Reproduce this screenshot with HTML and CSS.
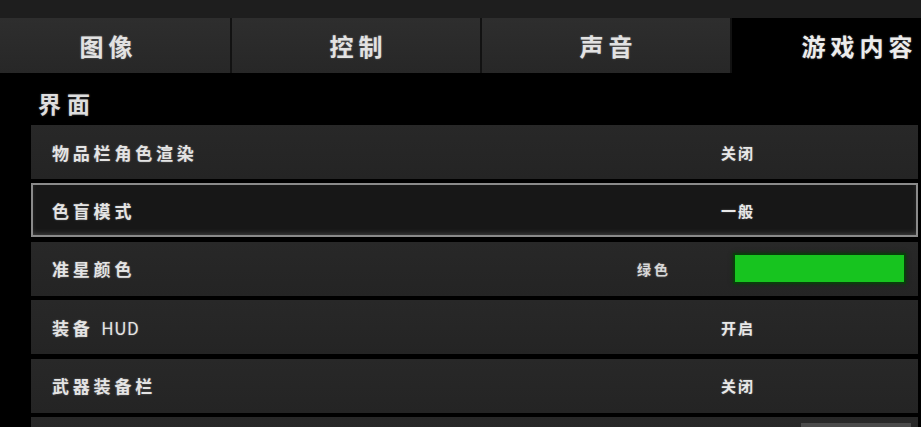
FILE: index.html
```html
<!DOCTYPE html>
<html lang="zh">
<head>
<meta charset="utf-8">
<link rel="stylesheet" href="styles.css">
</head>
<body>
<div class="topstrip"></div>
<nav class="tabs">
  <div class="tab">图像</div>
  <div class="tab">控制</div>
  <div class="tab">声音</div>
  <div class="tab active">游戏内容</div>
</nav>
<main class="content">
  <h2 class="section">界面</h2>
  <div class="rows">
    <div class="row"><span class="label">物品栏角色渲染</span><span class="value">关闭</span></div>
    <div class="row selected"><span class="label">色盲模式</span><span class="value">一般</span></div>
    <div class="row color-row"><span class="label">准星颜色</span><span class="cname">绿色</span><span class="swatch"></span></div>
    <div class="row"><span class="label">装备 <span class="latin">HUD</span></span><span class="value">开启</span></div>
    <div class="row"><span class="label">武器装备栏</span><span class="value">关闭</span></div>
    <div class="row"><span class="label"></span><span class="slider"></span></div>
  </div>
</main>
</body>
</html>
```
FILE: styles.css
```css
html, body {
  margin: 0;
  padding: 0;
  background: #000;
  width: 921px;
  height: 427px;
  overflow: hidden;
  font-family: "Noto Sans CJK SC", "Noto Sans", sans-serif;
  color: #e6e6e6;
}
.topstrip {
  height: 18px;
  background: #1e1e1e;
}
.tabs {
  display: flex;
  margin-left: -18px;
  height: 55px;
  overflow: hidden;
}
.tab {
  flex: 0 0 250px;
  box-sizing: border-box;
  display: flex;
  align-items: center;
  justify-content: center;
  background: linear-gradient(#2e2e2e, #272727);
  border-right: 2px solid #121212;
  font-size: 24px;
  font-weight: 700;
  letter-spacing: 5px;
  text-indent: 5px;
  color: #e2e2e2;
  text-shadow: 0 0 2px rgba(255,255,255,0.35);
}
.tab.active {
  background: #000;
  border-right: none;
  color: #ececec;
}
.content {
  padding-left: 31px;
  padding-right: 3px;
}
.section {
  margin: 0;
  padding-left: 7px;
  height: 52px;
  line-height: 60px;
  font-size: 23px;
  font-weight: 700;
  letter-spacing: 6px;
  color: #dedede;
  text-shadow: 0 0 2px rgba(255,255,255,0.35);
}
.rows {
  display: flex;
  flex-direction: column;
  gap: 4.4px;
}
.row {
  height: 54px;
  box-sizing: border-box;
  display: flex;
  align-items: center;
  background: linear-gradient(#282828, #242424);
  padding-left: 21px;
  font-size: 17px;
  font-weight: 700;
  text-shadow: 0 0 2px rgba(255,255,255,0.35);
}
.row.selected {
  background: #171717;
  border: 2px solid #8a8a8a;
  padding-left: 19px;
  box-shadow: inset 0 -3px 6px -3px rgba(200,200,200,0.35);
}
.label {
  flex: 1;
  letter-spacing: 3.8px;
  color: #e4e4e4;
}
.latin {
  letter-spacing: 0.5px;
  font-weight: 400;
}
.value {
  width: 80px;
  margin-right: 140px;
  text-align: center;
  letter-spacing: 2px;
  font-size: 15px;
  color: #e8e8e8;
}
.row.selected .value {
  margin-right: 138px;
}
.cname {
  width: 80px;
  text-align: center;
  letter-spacing: 3px;
  font-size: 14px;
  color: #d8d8d8;
}
.swatch {
  width: 169px;
  height: 27px;
  margin-left: 41px;
  margin-right: 14px;
  background: #17c41f;
  box-shadow: 0 0 0 2px #0a3d0c, 0 0 4px 2px rgba(0,60,0,0.8);
}
.slider {
  align-self: flex-start;
  margin-top: 6px;
  width: 110px;
  height: 10px;
  margin-right: 7px;
  background: #4a4a4a;
}
```
